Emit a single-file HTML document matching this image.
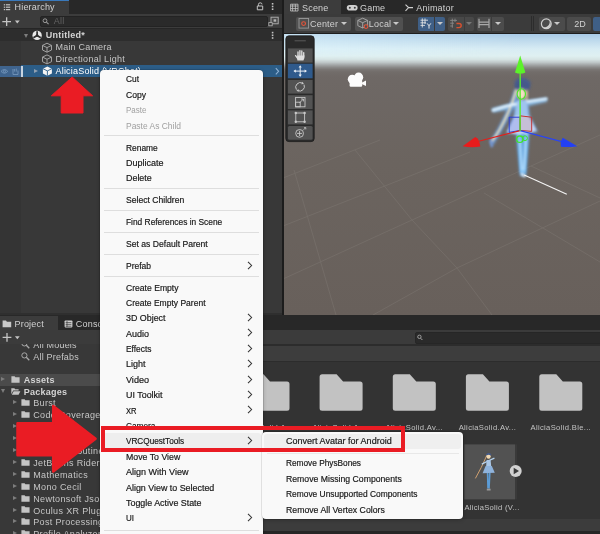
<!DOCTYPE html>
<html>
<head>
<meta charset="utf-8">
<style>
*{box-sizing:border-box;margin:0;padding:0}
html,body{width:600px;height:534px;overflow:hidden;background:#383838;font-family:"Liberation Sans",sans-serif;}
#root{filter:blur(0.3px);position:relative;width:600px;height:534px;overflow:hidden;background:#383838;font-size:9px;letter-spacing:.2px;color:#c6c6c6}
.abs{position:absolute}
svg{position:absolute;overflow:visible}
.t{position:absolute;white-space:nowrap;line-height:12px}
.b{font-weight:bold;letter-spacing:.25px;color:#d4d4d4}
.btn{position:absolute;background:#505050;border-radius:2px;top:16.5px;height:14.5px}
.blue{background:#3f5f86}
.dd{position:absolute;width:0;height:0;border-left:3.4px solid transparent;border-right:3.4px solid transparent;border-top:3.8px solid #c8c8c8}
.tri-r{position:absolute;width:0;height:0;border-top:2.8px solid transparent;border-bottom:2.8px solid transparent;border-left:4.2px solid #7d7d7d}
.tri-d{position:absolute;width:0;height:0;border-left:2.8px solid transparent;border-right:2.8px solid transparent;border-top:4.2px solid #7d7d7d}
.fold{position:absolute;width:9px;height:7px}
.menu{position:absolute;background:#f9f9f9;border-radius:4px;box-shadow:0 0 0 .5px rgba(0,0,0,.22),0 1px 4px rgba(0,0,0,.22);color:#111;-webkit-text-stroke:.18px #222;font-size:8.7px;letter-spacing:0;overflow:hidden}
.mi{position:absolute;left:26.4px;white-space:nowrap;line-height:12px}
.mi span{display:inline-block;transform-origin:0 50%}
.mi.dis{color:#a0a0a0;-webkit-text-stroke:0}
.sep{position:absolute;left:4.5px;right:4.5px;height:1px;background:#dedede}
.chev{left:147.6px;width:6px;height:9px}
.lab{position:absolute;white-space:nowrap;line-height:12px;text-align:center;width:80px;color:#c4c4c4;font-size:7.6px;letter-spacing:.34px}
</style>
</head>
<body>
<div id="root">

<!-- ================= HIERARCHY ================= -->
<div class="abs" style="left:0;top:0;width:282px;height:315px;background:#383838"></div>
<div class="abs" style="left:0;top:29px;width:21px;height:286px;background:#343434"></div>
<div class="abs" style="left:0;top:0;width:282px;height:14px;background:#282828"></div>
<div class="abs" style="left:0;top:0;width:68.75px;height:14px;background:#3c3c3c;border-top:1px solid #3a79bb"></div>
<div class="t" style="left:14.5px;top:1.4px;color:#d2d2d2">Hierarchy</div>
<div class="abs" style="left:0;top:14px;width:282px;height:15px;background:#3c3c3c;border-bottom:1px solid #262626"></div>
<div class="abs" style="left:39.5px;top:15.5px;width:228.5px;height:11.8px;background:#2a2a2a;border:1px solid #232323;border-radius:2px"></div>
<div class="t" style="left:53.75px;top:15.4px;color:#626262">All</div>
<div class="abs" style="left:0;top:29px;width:282px;height:12.3px;background:#2d2d2d"></div>
<div class="abs" style="left:21px;top:65.4px;width:261px;height:11.8px;background:#2c5d87"></div>
<div class="abs" style="left:0;top:65.5px;width:21px;height:11.8px;background:#3f648e"></div>
<div class="abs" style="left:21.2px;top:66px;width:1.4px;height:11px;background:#c8d4e0"></div>
<div class="t b" style="left:45.75px;top:29.4px;">Untitled*</div>
<div class="t" style="left:55.5px;top:40.6px">Main Camera</div>
<div class="t" style="left:55.5px;top:52.6px;letter-spacing:.3px">Directional Light</div>
<div class="t" style="left:55.5px;top:65.1px;color:#fff">AliciaSolid (VRChat)</div>
<div class="tri-d" style="left:23.6px;top:33.5px"></div>
<div class="tri-r" style="left:34px;top:68.8px;border-left-color:#8f9fb0"></div>
<svg style="left:0;top:0" width="284" height="90" viewBox="0 0 284 90">
  <!-- tab list icon -->
  <g fill="#c4c4c4">
    <rect x="3.8" y="4.2" width="1.2" height="1.2"/><rect x="5.8" y="4.2" width="4.4" height="1.2"/>
    <rect x="3.8" y="6.6" width="1.2" height="1.2"/><rect x="5.8" y="6.6" width="4.4" height="1.2"/>
    <rect x="3.8" y="9" width="1.2" height="1.2"/><rect x="5.8" y="9" width="4.4" height="1.2"/>
  </g>
  <!-- lock -->
  <path d="M257.3 6 H262.7 V9.8 H257.3 Z" fill="none" stroke="#c4c4c4" stroke-width="1"/>
  <path d="M258.4 6 V4.6 Q258.4 2.8 260.2 2.8 Q262 2.8 262 4.4" fill="none" stroke="#c4c4c4" stroke-width="1"/>
  <!-- kebab menus -->
  <g fill="#c4c4c4">
    <rect x="271.8" y="3" width="1.6" height="1.6"/><rect x="271.8" y="5.7" width="1.6" height="1.6"/><rect x="271.8" y="8.4" width="1.6" height="1.6"/>
    <rect x="271.8" y="31.8" width="1.6" height="1.6"/><rect x="271.8" y="34.5" width="1.6" height="1.6"/><rect x="271.8" y="37.2" width="1.6" height="1.6"/>
  </g>
  <!-- plus + dropdown -->
  <path d="M2.3 21.6 H11 M6.65 17.3 V26" stroke="#c4c4c4" stroke-width="1.3"/>
  <path d="M14.9 20.4 H19.7 L17.3 23.4 Z" fill="#c4c4c4"/>
  <!-- search magnifier -->
  <circle cx="45" cy="20.7" r="1.9" fill="none" stroke="#9a9a9a" stroke-width="1"/>
  <path d="M46.4 22.2 L48.6 24.2" stroke="#9a9a9a" stroke-width="1.1"/>
  <!-- search mode icon at right -->
  <rect x="271" y="17.2" width="7.2" height="6.6" fill="#4a4a4a" stroke="#b4b4b4" stroke-width="0.9"/>
  <rect x="273.6" y="19.3" width="2.6" height="2.4" fill="#b4b4b4"/>
  <rect x="268.8" y="22.6" width="3.4" height="3.2" fill="#3c3c3c" stroke="#b4b4b4" stroke-width="0.8"/>
  <!-- unity logo -->
  <circle cx="37.1" cy="35.4" r="4.7" fill="#e8e8e8"/>
  <path d="M37.1 35.6 L37.1 31.2 M37.1 35.6 L33.4 37.8 M37.1 35.6 L40.8 37.8" stroke="#2c2c2c" stroke-width="1.7" fill="none"/>
  <circle cx="37.1" cy="35.5" r="1.3" fill="#2c2c2c"/>
  <!-- cubes -->
  <g fill="none" stroke="#a8a8a8" stroke-width="0.95" stroke-linejoin="round">
    <path d="M47 43.2 L51.5 45.4 V50 L47 52.2 L42.5 50 V45.4 Z M42.5 45.4 L47 47.6 L51.5 45.4 M47 47.6 V52.2"/>
    <path d="M47 54.9 L51.5 57.1 V61.7 L47 63.9 L42.5 61.7 V57.1 Z M42.5 57.1 L47 59.3 L51.5 57.1 M47 59.3 V63.9"/>
  </g>
  <path d="M47.4 66.5 L51.9 68.7 V73.5 L47.4 75.8 L42.9 73.5 V68.7 Z" fill="#f4f4f4"/>
  <path d="M42.9 68.7 L47.4 70.9 L51.9 68.7 M47.4 70.9 V75.8" fill="none" stroke="#2c5d87" stroke-width="0.9"/>
  <!-- eye & hand on selected row -->
  <g fill="none" stroke="#7fa0c4" stroke-width="0.9" opacity=".8">
    <path d="M1 71.4 Q4.4 67.6 7.8 71.4 Q4.4 75 1 71.4 Z"/><circle cx="4.4" cy="71.3" r="1.1"/>
    <path d="M13 69 V74.5 H18 V70.5 M14.6 69 V71.6 M16.3 68.6 V71.6"/>
  </g>
  <!-- chevron at row end -->
  <path d="M275.8 68.2 L278.6 71.3 L275.8 74.4" fill="none" stroke="#8fb0d2" stroke-width="1.1"/>
</svg>


<div class="abs" style="left:0;top:312.6px;width:282px;height:2.4px;background:#2f2f2f"></div>
<!-- divider -->
<div class="abs" style="left:282px;top:0;width:2.4px;height:315px;background:#1c1c1c"></div>

<!-- ================= SCENE ================= -->
<div class="abs" style="left:283.8px;top:0;width:317px;height:315px;background:#282828"></div>
<div class="abs" style="left:283.8px;top:0;width:57.5px;height:14px;background:#3c3c3c"></div>
<div class="t" style="left:302px;top:1.6px;color:#d2d2d2">Scene</div>
<div class="t" style="left:360px;top:1.6px;color:#d2d2d2">Game</div>
<div class="t" style="left:416.3px;top:1.6px;color:#d2d2d2">Animator</div>
<div class="abs" style="left:283.8px;top:14px;width:317px;height:18.6px;background:#3b3b3b"></div>
<div class="abs" style="left:283.8px;top:32.6px;width:317px;height:1.2px;background:#1e1e1e"></div>
<!-- toolbar buttons -->
<div class="btn" style="left:296.3px;width:55px"></div>
<div class="t" style="left:310px;top:17.9px;color:#d0d0d0">Center</div>
<div class="dd" style="left:340.6px;top:22.3px"></div>
<div class="btn" style="left:354.5px;width:48px"></div>
<div class="t" style="left:368.8px;top:17.9px;color:#d0d0d0">Local</div>
<div class="dd" style="left:392.5px;top:22.3px"></div>
<div class="btn blue" style="left:417.5px;width:16.8px;border-radius:2px 0 0 2px"></div>
<div class="btn blue" style="left:435px;width:10px;border-radius:0 2px 2px 0"></div>
<div class="dd" style="left:436.6px;top:22.3px"></div>
<div class="btn" style="left:447.5px;width:16.3px;background:#484848;border-radius:2px 0 0 2px"></div>
<div class="btn" style="left:464.5px;width:9.8px;background:#484848;border-radius:0 2px 2px 0"></div>
<div class="dd" style="left:466.0px;top:22.3px;border-top-color:#777"></div>
<div class="btn" style="left:476.8px;width:14.5px;background:#4c4c4c;border-radius:2px 0 0 2px"></div>
<div class="btn" style="left:492px;width:11.8px;background:#4c4c4c;border-radius:0 2px 2px 0"></div>
<div class="dd" style="left:494.5px;top:22.3px"></div>
<div class="abs" style="left:530.6px;top:16px;width:.8px;height:15px;background:#2c2c2c"></div>
<div class="abs" style="left:533px;top:16px;width:.8px;height:15px;background:#2c2c2c"></div>
<div class="btn" style="left:538.7px;width:26px;background:#4b4b4b"></div>
<div class="dd" style="left:554.2px;top:22.3px"></div>
<div class="btn" style="left:567px;width:24.3px;background:#4b4b4b"></div>
<div class="t" style="left:574.2px;top:17.6px;color:#d0d0d0;letter-spacing:0">2D</div>
<div class="btn blue" style="left:593.3px;width:10px"></div>
<svg style="left:0;top:0" width="600" height="34" viewBox="0 0 600 34">
  <!-- scene grid icon -->
  <path d="M290.6 6 H298 M290.6 8.6 H298 M292.6 4.2 V11 M295.4 4.2 V11 M290.6 11 H298 M290.6 4.2 H298 M290.6 4.2 V11 M298 4.2 V11" stroke="#c4c4c4" stroke-width="0.8" fill="none"/>
  <!-- game controller icon -->
  <rect x="346.8" y="5" width="10.8" height="5.6" rx="2.8" fill="#d0d0d0"/>
  <circle cx="349.8" cy="7.8" r="1" fill="#3c3c3c"/><circle cx="354.8" cy="7.8" r="1" fill="#3c3c3c"/>
  <!-- animator icon -->
  <path d="M405.5 4.6 L408.6 7.6 L405.5 10.8 M408.6 7.6 H413" stroke="#d0d0d0" stroke-width="1.1" fill="none"/>
  <!-- Center icon -->
  <rect x="299" y="18.5" width="9.6" height="9.6" fill="none" stroke="#9a9a9a" stroke-width="0.9"/>
  <circle cx="303.6" cy="23.6" r="1.9" fill="none" stroke="#e8553a" stroke-width="1.1"/>
  <!-- Local icon: cube + red circle -->
  <path d="M362.7 18.2 L367.6 20.4 V25.6 L362.7 28 L357.8 25.6 V20.4 Z M357.8 20.4 L362.7 22.7 L367.6 20.4 M362.7 22.7 V28" fill="none" stroke="#aaa" stroke-width="0.9"/>
  <circle cx="366" cy="26.6" r="1.9" fill="#505050" stroke="#e8553a" stroke-width="1.1"/>
  <!-- grid snap icon (on blue) -->
  <path d="M420.5 20.2 H428 M420.5 22.8 H426 M420.5 25.4 H425 M422.3 18.4 V27.5 M425 18.4 V24" stroke="#e6e6e6" stroke-width="0.85" fill="none"/>
  <path d="M427.2 23.4 L429 25.8 L430.8 23.4 M429 25.8 V28.6" stroke="#f0f0f0" stroke-width="0.95" fill="none"/>
  <!-- snap increment icon -->
  <path d="M450.2 20.4 H457 M450.2 23.2 H454 M450.2 26 H453 M452.3 18.6 V27.8 M455 18.6 V22" stroke="#8a8a8a" stroke-width="0.85" fill="none"/>
  <path d="M456.4 23.5 H459 Q461.2 23.5 461.2 25.5 Q461.2 27.6 459 27.6 H456.4" stroke="#d8502f" stroke-width="1.4" fill="none"/>
  <!-- third icon -->
  <path d="M479 18.8 V28 M489 18.8 V28 M479 22.2 H489 M479 24.6 H489" stroke="#a8a8a8" stroke-width="1.2" fill="none"/>
  <!-- shading circle -->
  <circle cx="546.3" cy="23.8" r="4.9" fill="none" stroke="#cfcfcf" stroke-width="1.2"/>
  <path d="M549.6 20.9 A4.6 4.6 0 0 1 542.6 27 A5.4 5.4 0 0 0 549.6 20.9 Z" fill="#cfcfcf"/>
</svg>


<!-- scene view -->
<div class="abs" id="view" style="left:283.8px;top:33.8px;width:316.2px;height:281px;overflow:hidden;background:linear-gradient(#6e6865 46px,#6b645f 130px,#68605b 281px)">
  <div class="abs" style="left:0;top:0;width:100%;height:47px;background:linear-gradient(#a8cae6 0px,#c0dbed 7px,#d8ecf4 15px,#dff0f1 22px,#d6e3e3 25.5px,#bec6c7 28.5px,#a2a5a6 31px,#898887 33.5px,#7a7674 35.5px,#726d6a 38px,#6f6966 42px,#6e6865 47px)"></div>
  <div class="abs" style="left:0;top:0;width:100%;height:26px;background:linear-gradient(90deg,rgba(226,248,255,.5),rgba(226,248,255,.25) 35%,rgba(226,248,255,0) 75%);-webkit-mask-image:linear-gradient(#000 55%,transparent);mask-image:linear-gradient(#000 55%,transparent)"></div>
  <svg style="left:-283.8px;top:-33.8px" width="600" height="534" viewBox="0 0 600 534">
  <defs>
    <filter id="b1" x="-30%" y="-30%" width="160%" height="160%"><feGaussianBlur stdDeviation="0.9"/></filter>
    <filter id="b2" x="-30%" y="-30%" width="160%" height="160%"><feGaussianBlur stdDeviation="1.8"/></filter>
    <filter id="b05" x="-30%" y="-30%" width="160%" height="160%"><feGaussianBlur stdDeviation="0.5"/></filter>
  </defs>
  <!-- light edge -->
  <path d="M284.3 34 V50" stroke="#c0d8e8" stroke-width="1" opacity=".8"/>
  <!-- grid lines -->
  <g stroke="#8a847f" stroke-width="0.9" opacity=".34" fill="none" filter="url(#b05)">
    <path d="M283 279 L412 220 L531 166 L600 135"/>
    <path d="M373 315 L457 268 L600 201"/>
    <path d="M283 226 L400 180 L470 152"/>
    <path d="M412 220 L457 268 L492 315"/>
    <path d="M294 170 L336 315"/>
    <path d="M484 193 L600 262"/>
    <path d="M531 166 L600 198"/>
    <path d="M355 150 L412 220"/>
    <path d="M283 178 L380 140"/>
  </g>
  <!-- camera gizmo -->
  <g fill="#fcfcfc">
    <circle cx="352.2" cy="79.2" r="4.4"/><circle cx="358.6" cy="77.2" r="4.6"/>
    <rect x="349.6" y="79.5" width="12.6" height="7.3" rx="1.2"/>
    <path d="M361.6 82.8 L366 80.6 V86 L361.6 84 Z"/>
  </g>
  <!-- character glow -->
  <g filter="url(#b2)" opacity=".85">
    <path d="M514.5 81 Q522 74 530.5 82 L529 90 L515.5 90 Z" fill="#3f5b96"/>
    <path d="M491.5 108.5 L519 101.5 L547 97.8 L547 101.8 L524 107 L493 112.5 Z" fill="#86c2f6"/>
    <path d="M516 100 L527.6 100 L530 117 L538 132 L506 133.5 L513.4 117 Z" fill="#7fb4f0"/>
    <path d="M516 132 L529.4 132 L526 176 L520 176 Z" fill="#62aef2"/>
    <path d="M514.6 89 Q508 112 489.6 142.5 L493.4 145 Q511.6 116 519.4 94 Z" fill="#6ba4ea"/>
  </g>
  <g filter="url(#b1)">
    <path d="M515 84.8 Q521.6 77 530 84.8 L528.4 88.6 Q521.6 84.6 516.2 88.8 Z" fill="#45598a" opacity=".92"/>
    <ellipse cx="521.4" cy="94" rx="4.3" ry="5.4" fill="#f3dec2"/>
    <path d="M516.2 89.4 Q511.6 108 499.6 129.6 Q495 137.6 491 142.4" stroke="#f4dfb2" stroke-width="1.9" fill="none"/>
    <path d="M526.4 90 Q527.8 97 525.8 102" stroke="#f2dcae" stroke-width="1.5" fill="none"/>
    <path d="M493.2 110.2 Q506 105.6 519.6 103.6" stroke="#dceefc" stroke-width="3" fill="none" stroke-linecap="round"/>
    <path d="M523.4 102.4 Q535 100.6 546.2 98.8" stroke="#dceefc" stroke-width="2.8" fill="none" stroke-linecap="round"/>
    <path d="M517 100.6 L526.8 100.6 L528 116 L515.2 116 Z" fill="#9fc4ee"/>
    <path d="M514.6 116 L528.8 116 L536.4 130.6 Q522 137 507.4 132 Z" fill="#c6d6f2"/>
    <path d="M519 133.6 L521.6 173 M526.6 133.6 L524 173" stroke="#86c6f8" stroke-width="3" fill="none"/>
    <path d="M520.4 140 L521.8 170 M525.4 140 L524 170" stroke="#d6ecfc" stroke-width="0.9" fill="none"/>
    <path d="M521 174 L525.4 176.6" stroke="#eaf4fc" stroke-width="2.3"/>
    <path d="M491 140.6 L491.8 146" stroke="#7496d2" stroke-width="2.8" stroke-linecap="round"/>
  </g>
  <!-- plane handles -->
  <path d="M509.2 117.2 L520.1 117.2 L520.1 130.4 L509.2 132.4 Z" fill="rgba(70,80,220,.18)" stroke="#2b3fd2" stroke-width="1"/>
  <path d="M520.1 115.8 L531.7 117.2 L531.7 131.4 L520.1 130.4 Z" fill="rgba(200,60,60,.15)" stroke="#c23434" stroke-width="1"/>
  <!-- white line -->
  <path d="M524.2 175 L566.8 194.3" stroke="#f4f4f4" stroke-width="1.15"/>
  <!-- gizmo -->
  <path d="M520.1 130.6 L478.7 141.3" stroke="#e2201c" stroke-width="1.15"/>
  <path d="M520.1 130.6 L561.7 141.6" stroke="#2a45f2" stroke-width="1.15"/>
  <path d="M520.1 131 L520.2 72" stroke="#57ee2a" stroke-width="1.35"/>
  <path d="M520.2 55.6 L525.4 72.4 Q520.2 74.8 515 72.4 Z" fill="#5cf22a"/>
  <path d="M462.6 146.2 L475.3 137 Q479.6 139 480.3 146.4 Q472 148 462.6 146.2 Z" fill="#e81c1c"/>
  <path d="M577.4 146.2 L562.8 137.8 Q559.8 142 561 146.8 Q569 147.6 577.4 146.2 Z" fill="#2340f4"/>
  <ellipse cx="521.3" cy="94" rx="4.2" ry="5.2" fill="none" stroke="#4be82a" stroke-width="1.1"/>
  <circle cx="519.8" cy="139.2" r="3.2" fill="none" stroke="#40e626" stroke-width="1.3"/>
  <circle cx="525" cy="138.2" r="2.4" fill="none" stroke="#40e626" stroke-width="1"/>
  <!-- tool overlay -->
  <rect x="285.8" y="35.8" width="28.4" height="105.8" rx="3.2" fill="#2a2a2a" stroke="#1c1c1c" stroke-width="0.8"/>
  <path d="M294.6 40.8 H305.8" stroke="#5a5a5a" stroke-width="1"/>
  <rect x="287.9" y="48.4" width="24.7" height="14.2" fill="#535353"/>
  <rect x="287.9" y="63.7" width="24.7" height="14.6" fill="#2f5a8c"/>
  <rect x="287.9" y="79.9" width="24.7" height="13.7" fill="#535353"/>
  <rect x="287.9" y="95.2" width="24.7" height="13.9" fill="#535353"/>
  <rect x="287.9" y="110.4" width="24.7" height="14" fill="#535353"/>
  <rect x="287.9" y="126" width="24.7" height="13.7" rx="1.5" fill="#535353"/>
  <!-- hand -->
  <path d="M297.4 60.6 Q296.6 58.6 297.2 55.4 L304.6 55.4 Q304.8 58.8 303.4 60.6 Z" fill="#dedede"/>
  <path d="M298 55.8 V52 M299.9 55.8 V50.6 M301.8 55.8 V51 M303.7 56 V52.6 M297.6 58.4 L295.6 55.6" stroke="#dedede" stroke-width="1.35" stroke-linecap="round" fill="none"/>
  <!-- move -->
  <g stroke="#e8eef6" stroke-width="1" fill="#e8eef6">
    <path d="M300.2 66.4 V75.8 M294.6 71.1 H305.8" fill="none"/>
    <path d="M300.2 65.2 L301.8 67.6 H298.6 Z M300.2 77 L301.8 74.6 H298.6 Z M293.4 71.1 L295.8 69.5 V72.7 Z M307 71.1 L304.6 69.5 V72.7 Z" stroke="none"/>
  </g>
  <!-- rotate -->
  <path d="M296.4 89.6 A4.6 4.6 0 0 1 302.6 83.2 M304 84.6 A4.6 4.6 0 0 1 297.8 90.6" stroke="#c8c8c8" stroke-width="1" fill="none"/>
  <path d="M302 81.8 L304 83.6 L301.6 84.6 Z M298.4 92 L296.4 90.2 L298.8 89.2 Z" fill="#c8c8c8"/>
  <!-- scale -->
  <rect x="295.6" y="97.4" width="9.4" height="9.4" fill="none" stroke="#c8c8c8" stroke-width="0.9"/>
  <rect x="295.6" y="102.2" width="4.6" height="4.6" fill="none" stroke="#c8c8c8" stroke-width="0.9"/>
  <path d="M299.4 103 L303.4 99 M301 99 H303.4 V101.4" stroke="#c8c8c8" stroke-width="0.9" fill="none"/>
  <!-- rect tool -->
  <rect x="295.8" y="113" width="8.8" height="8.8" fill="none" stroke="#c8c8c8" stroke-width="0.9"/>
  <g fill="#c8c8c8"><circle cx="295.8" cy="113" r="1.2"/><circle cx="304.6" cy="113" r="1.2"/><circle cx="295.8" cy="121.8" r="1.2"/><circle cx="304.6" cy="121.8" r="1.2"/></g>
  <!-- transform tool -->
  <circle cx="299.6" cy="133.4" r="3.9" fill="none" stroke="#c8c8c8" stroke-width="0.9"/>
  <path d="M299.6 130.8 V136 M297 133.4 H302.2" stroke="#c8c8c8" stroke-width="0.9"/>
  <path d="M303.4 129.8 L305.6 127.8 M304 127.6 H305.8 V129.4" stroke="#c8c8c8" stroke-width="0.8" fill="none"/>
</svg>

</div>

<!-- ================= PROJECT ================= -->
<div class="abs" style="left:0;top:315px;width:600px;height:15.5px;background:#282828"></div>
<div class="abs" style="left:0;top:315.8px;width:58px;height:14.7px;background:#3c3c3c"></div>
<div class="t" style="left:14.5px;top:317.9px;color:#d2d2d2">Project</div>
<div class="t" style="left:75.8px;top:317.9px;color:#d2d2d2">Console</div>
<div class="abs" style="left:0;top:329.6px;width:600px;height:15.2px;background:#3b3b3b"></div>
<div class="abs" style="left:414.6px;top:331.8px;width:190px;height:12.6px;background:#2a2a2a;border:1px solid #262626;border-radius:2px"></div>
<!-- tree -->
<div class="abs" style="left:0;top:344px;width:230px;height:190px;background:#383838;overflow:hidden">
  <div class="abs" style="left:0;top:29.9px;width:230px;height:11.8px;background:#4b4b4b"></div>
  <svg style="left:21.20px;top:-4.20px;width:9px;height:9px" viewBox="0 0 9 9"><circle cx="3.4" cy="3.4" r="2.6" fill="none" stroke="#a8a8a8" stroke-width="1"/><path d="M5.3 5.3 L8.3 8.3" stroke="#a8a8a8" stroke-width="1.3"/></svg>
<div class="t" style="left:33.25px;top:-5.32px">All Models</div>
<svg style="left:21.20px;top:8.20px;width:9px;height:9px" viewBox="0 0 9 9"><circle cx="3.4" cy="3.4" r="2.6" fill="none" stroke="#a8a8a8" stroke-width="1"/><path d="M5.3 5.3 L8.3 8.3" stroke="#a8a8a8" stroke-width="1.3"/></svg>
<div class="t" style="left:33.25px;top:6.68px">All Prefabs</div>
<div class="tri-r" style="left:1.4px;top:32.60px"></div>
<svg class="fold" style="left:11.30px;top:31.50px" viewBox="0 0 9 7"><path d="M0.4 0.3 H3.6 L4.4 1.3 H8.6 V6.8 H0.4 Z" fill="#c4c4c4"/></svg>
<div class="t b" style="left:23.75px;top:29.68px">Assets</div>
<div class="tri-d" style="left:1.1px;top:45.40px"></div>
<svg class="fold" style="left:11.30px;top:43.50px" viewBox="0 0 9 7"><path d="M0.3 0.3 H3.4 L4.2 1.3 H7.6 V2.6 H2.2 L0.3 6.2 Z M2.6 3.2 H9.4 L7.6 6.8 H0.8 Z" fill="#c4c4c4"/></svg>
<div class="t b" style="left:23.75px;top:41.68px">Packages</div>
<div class="tri-r" style="left:12.6px;top:56.40px"></div>
<svg class="fold" style="left:21.30px;top:55.30px" viewBox="0 0 9 7"><path d="M0.4 0.3 H3.6 L4.4 1.3 H8.6 V6.8 H0.4 Z" fill="#c4c4c4"/></svg>
<div class="t" style="left:33.25px;top:53.48px;letter-spacing:.34px">Burst</div>
<div class="tri-r" style="left:12.6px;top:68.30px"></div>
<svg class="fold" style="left:21.30px;top:67.20px" viewBox="0 0 9 7"><path d="M0.4 0.3 H3.6 L4.4 1.3 H8.6 V6.8 H0.4 Z" fill="#c4c4c4"/></svg>
<div class="t" style="left:33.25px;top:65.38px;letter-spacing:.34px">Code Coverage</div>
<div class="tri-r" style="left:12.6px;top:80.20px"></div>
<svg class="fold" style="left:21.30px;top:79.10px" viewBox="0 0 9 7"><path d="M0.4 0.3 H3.6 L4.4 1.3 H8.6 V6.8 H0.4 Z" fill="#c4c4c4"/></svg>
<div class="t" style="left:33.25px;top:77.28px;letter-spacing:.34px">Core RP</div>
<div class="tri-r" style="left:12.6px;top:92.10px"></div>
<svg class="fold" style="left:21.30px;top:91.00px" viewBox="0 0 9 7"><path d="M0.4 0.3 H3.6 L4.4 1.3 H8.6 V6.8 H0.4 Z" fill="#c4c4c4"/></svg>
<div class="t" style="left:33.25px;top:89.18px;letter-spacing:.34px">Custom NUnit</div>
<div class="tri-r" style="left:12.6px;top:104.00px"></div>
<svg class="fold" style="left:21.30px;top:102.90px" viewBox="0 0 9 7"><path d="M0.4 0.3 H3.6 L4.4 1.3 H8.6 V6.8 H0.4 Z" fill="#c4c4c4"/></svg>
<div class="t" style="left:33.25px;top:101.08px;letter-spacing:.34px">Editor Coroutines</div>
<div class="tri-r" style="left:12.6px;top:115.90px"></div>
<svg class="fold" style="left:21.30px;top:114.80px" viewBox="0 0 9 7"><path d="M0.4 0.3 H3.6 L4.4 1.3 H8.6 V6.8 H0.4 Z" fill="#c4c4c4"/></svg>
<div class="t" style="left:33.25px;top:112.98px;letter-spacing:.34px">JetBrains Rider</div>
<div class="tri-r" style="left:12.6px;top:127.80px"></div>
<svg class="fold" style="left:21.30px;top:126.70px" viewBox="0 0 9 7"><path d="M0.4 0.3 H3.6 L4.4 1.3 H8.6 V6.8 H0.4 Z" fill="#c4c4c4"/></svg>
<div class="t" style="left:33.25px;top:124.88px;letter-spacing:.34px">Mathematics</div>
<div class="tri-r" style="left:12.6px;top:139.70px"></div>
<svg class="fold" style="left:21.30px;top:138.60px" viewBox="0 0 9 7"><path d="M0.4 0.3 H3.6 L4.4 1.3 H8.6 V6.8 H0.4 Z" fill="#c4c4c4"/></svg>
<div class="t" style="left:33.25px;top:136.78px;letter-spacing:.34px">Mono Cecil</div>
<div class="tri-r" style="left:12.6px;top:151.60px"></div>
<svg class="fold" style="left:21.30px;top:150.50px" viewBox="0 0 9 7"><path d="M0.4 0.3 H3.6 L4.4 1.3 H8.6 V6.8 H0.4 Z" fill="#c4c4c4"/></svg>
<div class="t" style="left:33.25px;top:148.68px;letter-spacing:.34px">Newtonsoft Json</div>
<div class="tri-r" style="left:12.6px;top:163.50px"></div>
<svg class="fold" style="left:21.30px;top:162.40px" viewBox="0 0 9 7"><path d="M0.4 0.3 H3.6 L4.4 1.3 H8.6 V6.8 H0.4 Z" fill="#c4c4c4"/></svg>
<div class="t" style="left:33.25px;top:160.58px;letter-spacing:.34px">Oculus XR Plugin</div>
<div class="tri-r" style="left:12.6px;top:175.40px"></div>
<svg class="fold" style="left:21.30px;top:174.30px" viewBox="0 0 9 7"><path d="M0.4 0.3 H3.6 L4.4 1.3 H8.6 V6.8 H0.4 Z" fill="#c4c4c4"/></svg>
<div class="t" style="left:33.25px;top:172.48px;letter-spacing:.34px">Post Processing</div>
<div class="tri-r" style="left:12.6px;top:187.30px"></div>
<svg class="fold" style="left:21.30px;top:186.20px" viewBox="0 0 9 7"><path d="M0.4 0.3 H3.6 L4.4 1.3 H8.6 V6.8 H0.4 Z" fill="#c4c4c4"/></svg>
<div class="t" style="left:33.25px;top:184.38px;letter-spacing:.34px">Profile Analyzer</div>
</div>
<!-- asset area -->
<div class="abs" style="left:230px;top:344px;width:370px;height:2px;background:#2c2c2c"></div>
<div class="abs" style="left:230px;top:346px;width:370px;height:16px;background:#3d3d3d;border-bottom:1px solid #2c2c2c"></div>
<div class="abs" style="left:230px;top:362px;width:370px;height:157px;background:#333333"></div>
<div class="abs" style="left:230px;top:519px;width:370px;height:12px;background:#3c3c3c"></div>
<div class="abs" style="left:230px;top:531px;width:370px;height:3px;background:#262626"></div>
<svg style="left:0;top:0" width="600" height="534" viewBox="0 0 600 534"><path d="M249.0 374.3 H263.5 L270.0 381.6 H287.0 Q289.5 381.6 289.5 384.1 V408.3 Q289.5 410.8 287.0 410.8 H249.0 Q246.5 410.8 246.5 408.3 V376.8 Q246.5 374.3 249.0 374.3 Z M322.1 374.3 H336.6 L343.1 381.6 H360.1 Q362.6 381.6 362.6 384.1 V408.3 Q362.6 410.8 360.1 410.8 H322.1 Q319.6 410.8 319.6 408.3 V376.8 Q319.6 374.3 322.1 374.3 Z M395.3 374.3 H409.8 L416.3 381.6 H433.3 Q435.8 381.6 435.8 384.1 V408.3 Q435.8 410.8 433.3 410.8 H395.3 Q392.8 410.8 392.8 408.3 V376.8 Q392.8 374.3 395.3 374.3 Z M468.4 374.3 H482.9 L489.4 381.6 H506.4 Q508.9 381.6 508.9 384.1 V408.3 Q508.9 410.8 506.4 410.8 H468.4 Q465.9 410.8 465.9 408.3 V376.8 Q465.9 374.3 468.4 374.3 Z M541.8 374.3 H556.3 L562.8 381.6 H579.8 Q582.3 381.6 582.3 384.1 V408.3 Q582.3 410.8 579.8 410.8 H541.8 Q539.3 410.8 539.3 408.3 V376.8 Q539.3 374.3 541.8 374.3 Z" fill="#c2c2c2"/></svg>
<div class="lab" style="left:228.0px;top:422.05px">AliciaSolid.Av...</div>
<div class="lab" style="left:301.1px;top:422.05px">AliciaSolid.Av...</div>
<div class="lab" style="left:374.3px;top:422.05px">AliciaSolid.Av...</div>
<div class="lab" style="left:447.4px;top:422.05px">AliciaSolid.Av...</div>
<div class="lab" style="left:520.8px;top:422.05px">AliciaSolid.Ble...</div>
<svg style="left:0;top:0" width="600" height="534" viewBox="0 0 600 534">
  <defs>
    <filter id="tb1" x="-30%" y="-30%" width="160%" height="160%"><feGaussianBlur stdDeviation="0.55"/></filter>
  </defs>
  <!-- project tab icons -->
  <path d="M2.6 320.6 H6 L6.9 321.8 H11.2 V327.2 H2.6 Z" fill="#c8c8c8"/>
  <rect x="64.6" y="320.4" width="7.8" height="7" rx="0.8" fill="#d0d0d0"/>
  <path d="M65.6 322.6 H71.4 M65.6 324.4 H71.4 M65.6 326.2 H71.4 M67 321 V327" stroke="#3a3a3a" stroke-width="0.7"/>
  <path d="M2.6 337.4 H11.4 M7 333 V341.8" stroke="#c4c4c4" stroke-width="1.3"/>
  <path d="M14.9 336.2 H19.7 L17.3 339.2 Z" fill="#c4c4c4"/>
  <circle cx="419.4" cy="336.8" r="1.7" fill="none" stroke="#a8a8a8" stroke-width="0.9"/>
  <path d="M420.6 338.2 L422.4 340" stroke="#a8a8a8" stroke-width="1"/>
  <!-- thumbnail -->
  <rect x="464.4" y="444.4" width="50.6" height="55" fill="#525252"/>
  <rect x="515" y="444.4" width="2" height="55" fill="#3a3a3a"/>
  <g filter="url(#tb1)">
    <path d="M487 455 Q481.4 468 475.4 478.4" stroke="#cfa070" stroke-width="1" fill="none"/>
    <ellipse cx="488.6" cy="456.2" rx="2.1" ry="2.6" fill="#f0d9b4"/>
    <path d="M486 454.4 Q488.6 451.6 491.4 454.4 L490.6 455.4 Q488.6 454 486.6 455.6 Z" fill="#40588a"/>
    <path d="M481.8 464.2 L488 461 L494.4 458.2" stroke="#b4d2ee" stroke-width="1.3" fill="none"/>
    <path d="M486.6 460 L490.6 460 L491.2 466 L486.2 466 Z" fill="#a9c6e6"/>
    <path d="M485.6 466 L491.8 466 L494.8 472.8 L482.6 473.2 Z" fill="#8fb3dc"/>
    <path d="M487.6 473 L488 488.6 M489.8 473 L489 488.6" stroke="#5b9cd6" stroke-width="1.6" fill="none"/>
    <path d="M486.8 489.6 H490.6" stroke="#9a9a9a" stroke-width="1.8"/>
  </g>
  <circle cx="515.7" cy="471" r="6" fill="#d2d2d2"/>
  <path d="M513.7 467.8 L519 471 L513.7 474.2 Z" fill="#3c3c3c"/>
</svg>
<div class="lab" style="left:452px;top:501.5px;letter-spacing:.28px">AliciaSolid (V...</div>


<!-- ================= ARROWS (behind menu) ================= -->
<svg style="left:0;top:0" width="600" height="534" viewBox="0 0 600 534">
  <path d="M72.2 77 L92.6 95.8 L83 95.8 L83 113 L61.2 113 L61.2 95.8 L51.3 95.8 Z" fill="#ea1c24" stroke="#ea1c24" stroke-width="1" stroke-linejoin="round"/>
  <path d="M17.5 423.2 L53.2 423.2 L53.2 406 L95.6 438.8 L53.2 471.4 L53.2 455.2 L17.5 455.2 Z" fill="#ea1c24" stroke="#ea1c24" stroke-width="2.5" stroke-linejoin="round"/>
</svg>

<!-- ================= CONTEXT MENU ================= -->
<div class="menu" id="m1" style="left:99.8px;top:69.8px;width:163.3px;height:475px">
<div class="abs" style="left:3px;top:363px;width:158px;height:16.2px;background:#eeeeee;border-radius:3px"></div>
<div class="mi" style="top:3.59px"><span style="transform:scaleX(0.961)">Cut</span></div>
<div class="mi" style="top:18.99px"><span style="transform:scaleX(0.986)">Copy</span></div>
<div class="mi dis" style="top:34.39px"><span style="transform:scaleX(0.923)">Paste</span></div>
<div class="mi dis" style="top:49.79px"><span style="transform:scaleX(0.973)">Paste As Child</span></div>
<div class="mi" style="top:71.79px"><span style="transform:scaleX(0.967)">Rename</span></div>
<div class="mi" style="top:87.09px"><span style="transform:scaleX(1.035)">Duplicate</span></div>
<div class="mi" style="top:102.59px"><span style="transform:scaleX(1.025)">Delete</span></div>
<div class="mi" style="top:124.59px"><span style="transform:scaleX(0.989)">Select Children</span></div>
<div class="mi" style="top:146.59px"><span style="transform:scaleX(0.963)">Find References in Scene</span></div>
<div class="mi" style="top:168.49px"><span style="transform:scaleX(0.990)">Set as Default Parent</span></div>
<div class="mi" style="top:190.39px"><span style="transform:scaleX(0.976)">Prefab</span></div>
<svg class="chev" style="top:191.20px" viewBox="0 0 6 9"><path d="M1 0.8 L4.6 4.5 L1 8.2" fill="none" stroke="#333" stroke-width="1.05"/></svg>
<div class="mi" style="top:211.79px"><span style="transform:scaleX(0.989)">Create Empty</span></div>
<div class="mi" style="top:227.19px"><span style="transform:scaleX(0.980)">Create Empty Parent</span></div>
<div class="mi" style="top:242.49px"><span style="transform:scaleX(1.022)">3D Object</span></div>
<svg class="chev" style="top:243.30px" viewBox="0 0 6 9"><path d="M1 0.8 L4.6 4.5 L1 8.2" fill="none" stroke="#333" stroke-width="1.05"/></svg>
<div class="mi" style="top:257.89px"><span style="transform:scaleX(1.034)">Audio</span></div>
<svg class="chev" style="top:258.70px" viewBox="0 0 6 9"><path d="M1 0.8 L4.6 4.5 L1 8.2" fill="none" stroke="#333" stroke-width="1.05"/></svg>
<div class="mi" style="top:273.39px"><span style="transform:scaleX(0.966)">Effects</span></div>
<svg class="chev" style="top:274.20px" viewBox="0 0 6 9"><path d="M1 0.8 L4.6 4.5 L1 8.2" fill="none" stroke="#333" stroke-width="1.05"/></svg>
<div class="mi" style="top:288.69px"><span style="transform:scaleX(1.035)">Light</span></div>
<svg class="chev" style="top:289.50px" viewBox="0 0 6 9"><path d="M1 0.8 L4.6 4.5 L1 8.2" fill="none" stroke="#333" stroke-width="1.05"/></svg>
<div class="mi" style="top:304.09px"><span style="transform:scaleX(1.042)">Video</span></div>
<svg class="chev" style="top:304.90px" viewBox="0 0 6 9"><path d="M1 0.8 L4.6 4.5 L1 8.2" fill="none" stroke="#333" stroke-width="1.05"/></svg>
<div class="mi" style="top:319.59px"><span style="transform:scaleX(1.026)">UI Toolkit</span></div>
<svg class="chev" style="top:320.40px" viewBox="0 0 6 9"><path d="M1 0.8 L4.6 4.5 L1 8.2" fill="none" stroke="#333" stroke-width="1.05"/></svg>
<div class="mi" style="top:334.89px"><span style="transform:scaleX(0.869)">XR</span></div>
<svg class="chev" style="top:335.70px" viewBox="0 0 6 9"><path d="M1 0.8 L4.6 4.5 L1 8.2" fill="none" stroke="#333" stroke-width="1.05"/></svg>
<div class="mi" style="top:350.19px"><span style="transform:scaleX(0.954)">Camera</span></div>
<div class="mi" style="top:365.59px"><span style="transform:scaleX(0.942)">VRCQuestTools</span></div>
<svg class="chev" style="top:366.40px" viewBox="0 0 6 9"><path d="M1 0.8 L4.6 4.5 L1 8.2" fill="none" stroke="#333" stroke-width="1.05"/></svg>
<div class="mi" style="top:380.89px"><span style="transform:scaleX(1.009)">Move To View</span></div>
<div class="mi" style="top:396.39px"><span style="transform:scaleX(1.038)">Align With View</span></div>
<div class="mi" style="top:411.79px"><span style="transform:scaleX(1.023)">Align View to Selected</span></div>
<div class="mi" style="top:427.19px"><span style="transform:scaleX(1.022)">Toggle Active State</span></div>
<div class="mi" style="top:442.59px"><span style="transform:scaleX(0.921)">UI</span></div>
<svg class="chev" style="top:443.40px" viewBox="0 0 6 9"><path d="M1 0.8 L4.6 4.5 L1 8.2" fill="none" stroke="#333" stroke-width="1.05"/></svg>
<div class="sep" style="top:65.00px"></div>
<div class="sep" style="top:118.20px"></div>
<div class="sep" style="top:140.00px"></div>
<div class="sep" style="top:162.20px"></div>
<div class="sep" style="top:184.00px"></div>
<div class="sep" style="top:205.90px"></div>
<div class="sep" style="top:460.00px"></div>
</div>

<!-- ================= SUBMENU ================= -->
<div class="menu" id="m2" style="left:262px;top:431.5px;width:201.4px;height:87.6px;clip-path:inset(-12px -12px -12px -0.5px)">
<div class="abs" style="left:2px;top:2.6px;width:196.8px;height:15px;background:#efefef;border-radius:3px"></div>
<div class="mi" style="left:24.25px;top:3.99px"><span style="transform:scaleX(1.039)">Convert Avatar for Android</span></div>
<div class="mi" style="left:24.25px;top:25.99px"><span style="transform:scaleX(0.953)">Remove PhysBones</span></div>
<div class="mi" style="left:24.25px;top:41.49px"><span style="transform:scaleX(0.999)">Remove Missing Components</span></div>
<div class="mi" style="left:24.25px;top:56.89px"><span style="transform:scaleX(0.966)">Remove Unsupported Components</span></div>
<div class="mi" style="left:24.25px;top:72.29px"><span style="transform:scaleX(1.003)">Remove All Vertex Colors</span></div>
<div class="sep" style="top:21.00px;background:#e8e8e8"></div>
</div>

<!-- red highlight rectangle -->
<div class="abs" style="left:100.5px;top:426px;width:304.2px;height:26.2px;border:4.6px solid #ea1c24"></div>

</div>
</body>
</html>
